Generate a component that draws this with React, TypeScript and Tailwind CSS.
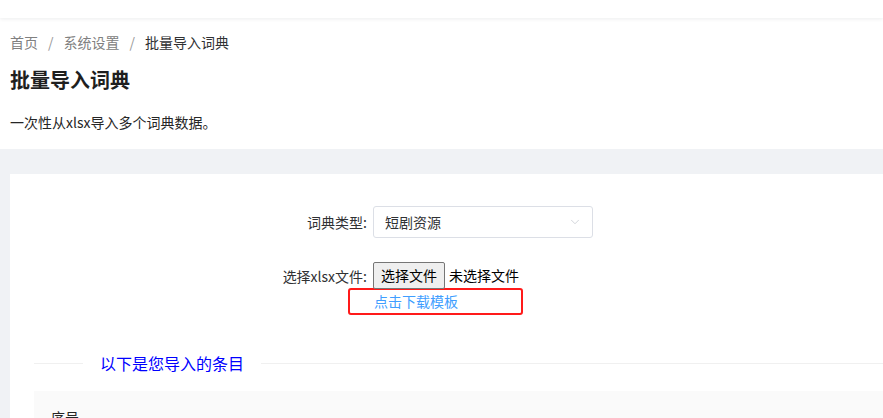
import { ChevronDown } from 'lucide-react';

export default function App() {
    const font = { fontFamily: '"Noto Sans CJK SC", "Noto Sans", sans-serif' };

    return (
        <div className="w-[883px] h-[418px] overflow-hidden bg-white" style={font}>
            {/* 顶部栏 */}
            <div className="h-[18px] bg-white shadow-[0_1px_4px_rgba(0,21,41,0.08)] relative z-10" />

            {/* 页头 */}
            <div className="px-[10px] bg-white">
                <div className="flex items-center h-[46px] pt-[2px] text-[14px] text-[#808080]">
                    <span>首页</span>
                    <span className="mx-[10px] text-[#999]">/</span>
                    <span>系统设置</span>
                    <span className="mx-[10px] text-[#999]">/</span>
                    <span className="text-[#303133]">批量导入词典</span>
                </div>
                <h1 className="text-[20px] font-bold text-[#1f1f1f] leading-[30px] mt-[1px]">批量导入词典</h1>
                <p className="text-[14px] text-[#262626] mt-[16px] leading-[22px] pb-[16px]">一次性从xlsx导入多个词典数据。</p>
            </div>

            {/* 内容区 */}
            <div className="bg-[#f0f2f5] pt-[25px] pl-[10px] h-full">
                <div className="bg-white pl-[24px] pt-[32px] h-full">
                    <div className="flex items-center">
                        <label className="w-[339px] text-right pr-[6px] text-[14px] text-[#303133]">词典类型:</label>
                        <div className="w-[220px] h-[32px] border border-[#dcdfe6] rounded-[3px] flex items-center justify-between pl-[11px] pr-[10px]">
                            <span className="text-[14px] text-[#303133]">短剧资源</span>
                            <ChevronDown size={14} strokeWidth={1.2} className="text-[#c0c4cc]" />
                        </div>
                    </div>

                    <div className="flex items-start mt-[24px]">
                        <label className="w-[339px] text-right pr-[6px] text-[14px] text-[#303133] mt-[4px]">选择xlsx文件:</label>
                        <div className="flex items-center">
                            <button className="h-[27px] px-[7px] bg-[#efefef] border border-[#767676] rounded-[2px] text-[14px] text-black">选择文件</button>
                            <span className="ml-[4px] text-[14px] text-black">未选择文件</span>
                        </div>
                    </div>

                    <div className="ml-[314px] w-[175px] h-[27px] border-2 border-[#ff1a1a] rounded-[3px] flex items-center pl-[24px] -mt-[1px]">
                        <span className="text-[14px] text-[#409eff]">点击下载模板</span>
                    </div>

                    {/* 分隔线 */}
                    <div className="flex items-center mt-[36px]">
                        <div className="w-[49px] h-px bg-[#f0f0f0]" />
                        <span className="px-[17px] text-[16px] text-[#0000ff] leading-[24px]">以下是您导入的条目</span>
                        <div className="flex-1 h-px bg-[#f0f0f0]" />
                    </div>

                    {/* 表头 */}
                    <div className="mt-[16px] bg-[#fafafa] h-[60px] pl-[17px] pt-[16px] text-[14px] text-[#262626]">
                        <span>序号</span>
                    </div>
                </div>
            </div>
        </div>
    );
}
